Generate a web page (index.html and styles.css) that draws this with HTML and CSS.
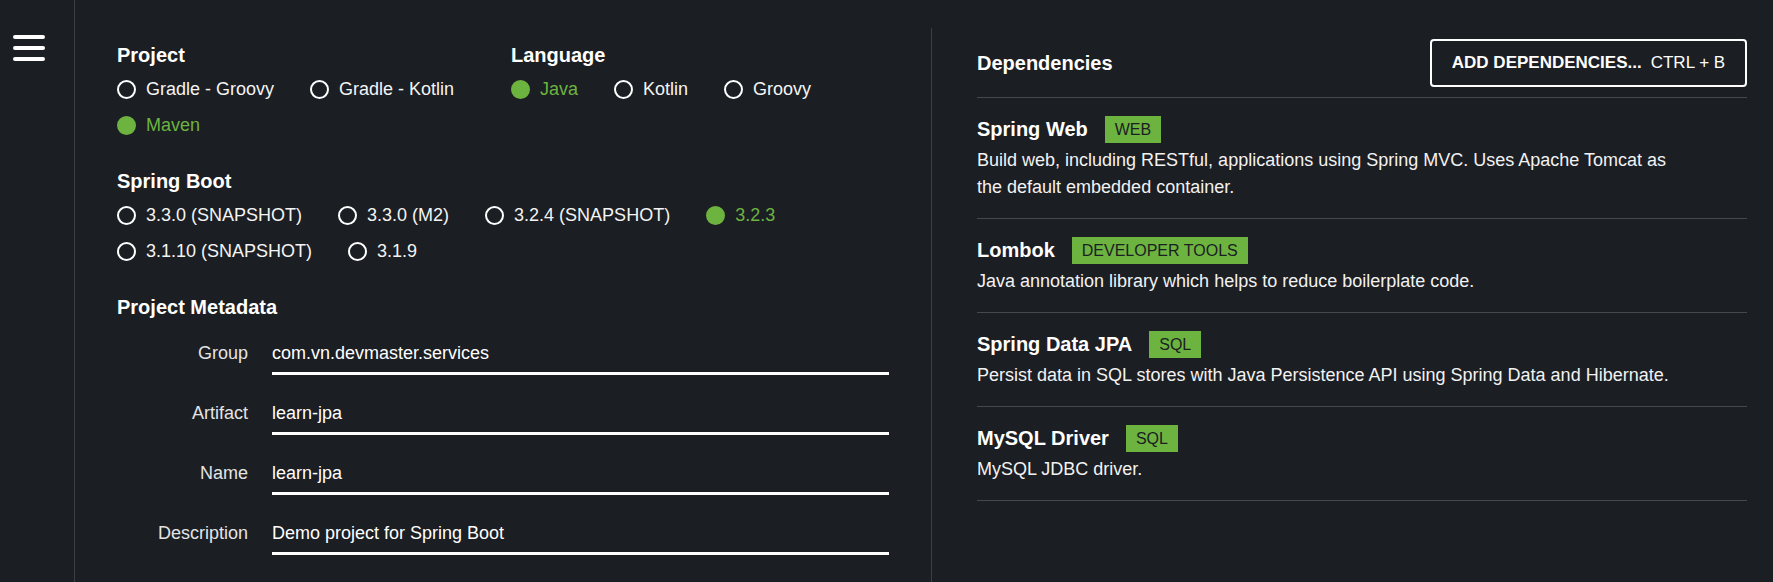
FILE: index.html
```html
<!DOCTYPE html>
<html lang="en">
<head>
<meta charset="utf-8">
<title>Spring Initializr</title>
<link rel="stylesheet" href="styles.css">
</head>
<body>
<div class="app">
  <aside class="sidebar">
    <button class="menu-btn" aria-label="Menu">
      <svg width="32" height="28" viewBox="0 0 32 28" aria-hidden="true">
        <line x1="2" y1="3" x2="30" y2="3" stroke="#fff" stroke-width="4" stroke-linecap="round"/>
        <line x1="2" y1="14" x2="30" y2="14" stroke="#fff" stroke-width="4" stroke-linecap="round"/>
        <line x1="2" y1="25" x2="30" y2="25" stroke="#fff" stroke-width="4" stroke-linecap="round"/>
      </svg>
    </button>
  </aside>
  <main class="main">
    <section class="left">
      <div class="top-grid section">
        <div class="group">
          <h2 class="heading">Project</h2>
          <div class="radios">
            <span class="radio"><span class="dot"></span>Gradle - Groovy</span>
            <span class="radio"><span class="dot"></span>Gradle - Kotlin</span>
            <span class="radio checked"><span class="dot"></span>Maven</span>
          </div>
        </div>
        <div class="group">
          <h2 class="heading">Language</h2>
          <div class="radios">
            <span class="radio checked"><span class="dot"></span>Java</span>
            <span class="radio"><span class="dot"></span>Kotlin</span>
            <span class="radio"><span class="dot"></span>Groovy</span>
          </div>
        </div>
      </div>
      <div class="section">
        <h2 class="heading">Spring Boot</h2>
        <div class="radios">
          <span class="radio"><span class="dot"></span>3.3.0 (SNAPSHOT)</span>
          <span class="radio"><span class="dot"></span>3.3.0 (M2)</span>
          <span class="radio"><span class="dot"></span>3.2.4 (SNAPSHOT)</span>
          <span class="radio checked"><span class="dot"></span>3.2.3</span>
          <span class="radio"><span class="dot"></span>3.1.10 (SNAPSHOT)</span>
          <span class="radio"><span class="dot"></span>3.1.9</span>
        </div>
      </div>
      <div class="section meta">
        <h2 class="heading">Project Metadata</h2>
        <div class="fields">
          <div class="field-row"><span class="label">Group</span><span class="field">com.vn.devmaster.services</span></div>
          <div class="field-row"><span class="label">Artifact</span><span class="field">learn-jpa</span></div>
          <div class="field-row"><span class="label">Name</span><span class="field">learn-jpa</span></div>
          <div class="field-row"><span class="label">Description</span><span class="field">Demo project for Spring Boot</span></div>
        </div>
      </div>
    </section>
    <section class="right">
      <div class="deps-head">
        <h2 class="heading">Dependencies</h2>
        <button class="add-btn"><strong>ADD DEPENDENCIES...</strong><span class="shortcut">CTRL + B</span></button>
      </div>
      <ul class="deps">
        <li class="dep">
          <div class="dep-title"><span class="dep-name">Spring Web</span><span class="badge">WEB</span></div>
          <p class="dep-desc">Build web, including RESTful, applications using Spring MVC. Uses Apache Tomcat as the default embedded container.</p>
        </li>
        <li class="dep">
          <div class="dep-title"><span class="dep-name">Lombok</span><span class="badge">DEVELOPER TOOLS</span></div>
          <p class="dep-desc">Java annotation library which helps to reduce boilerplate code.</p>
        </li>
        <li class="dep">
          <div class="dep-title"><span class="dep-name">Spring Data JPA</span><span class="badge">SQL</span></div>
          <p class="dep-desc">Persist data in SQL stores with Java Persistence API using Spring Data and Hibernate.</p>
        </li>
        <li class="dep">
          <div class="dep-title"><span class="dep-name">MySQL Driver</span><span class="badge">SQL</span></div>
          <p class="dep-desc">MySQL JDBC driver.</p>
        </li>
      </ul>
    </section>
  </main>
</div>
</body>
</html>
```
FILE: styles.css
```css
* { box-sizing: border-box; }
html, body {
  margin: 0;
  padding: 0;
  background: #1b1e23;
  color: #fff;
  font-family: "Liberation Sans", Arial, sans-serif;
  font-size: 18px;
}
.app {
  display: flex;
  min-height: 100vh;
}
.sidebar {
  width: 75px;
  flex: none;
  border-right: 1px solid #3b3e44;
  padding-top: 34px;
  padding-left: 13px;
}
.menu-btn {
  background: none;
  border: 0;
  padding: 0;
  display: block;
  cursor: pointer;
}
.menu-btn svg { display: block; }
.main {
  flex: 1;
  display: flex;
}
.left {
  width: 856px;
  flex: none;
  padding: 43px 42px 0 42px;
}
.heading {
  margin: 0;
  font-size: 20px;
  line-height: 24px;
  font-weight: bold;
  color: #fff;
}
.section { margin-bottom: 26px; }
.top-grid {
  display: grid;
  grid-template-columns: 394px 1fr;
}
.radios {
  display: flex;
  flex-wrap: wrap;
  margin-top: 4px;
}
.radio {
  display: inline-flex;
  align-items: center;
  height: 36px;
  margin-right: 36px;
  white-space: nowrap;
  color: #f4f4f4;
}
.dot {
  width: 19px;
  height: 19px;
  border: 2px solid #fff;
  border-radius: 50%;
  margin-right: 10px;
  flex: none;
}
.radio.checked { color: #6db33f; }
.radio.checked .dot {
  background: #6db33f;
  border-color: #6db33f;
}
.fields { margin-top: 19px; }
.field-row {
  display: grid;
  grid-template-columns: 131px 617px;
  column-gap: 24px;
  margin-bottom: 23px;
}
.label {
  text-align: right;
  line-height: 27px;
  padding-top: 2px;
  color: #e4e4e4;
}
.field {
  line-height: 27px;
  padding-top: 2px;
  padding-bottom: 5px;
  border-bottom: 3px solid #fff;
  color: #fff;
}
.right {
  flex: 1;
  margin-top: 28px;
  border-left: 1px solid #3b3e44;
  padding: 0 26px 0 45px;
}
.deps-head {
  display: flex;
  align-items: center;
  justify-content: space-between;
  padding: 11px 0 10px;
  border-bottom: 1px solid #45484d;
}
.add-btn {
  width: 317px;
  height: 48px;
  background: transparent;
  border: 2px solid #fff;
  border-radius: 4px;
  color: #fff;
  font-family: "Liberation Sans", Arial, sans-serif;
  font-size: 17px;
  display: flex;
  align-items: center;
  justify-content: center;
  gap: 9px;
  padding: 0;
  cursor: pointer;
}
.add-btn strong { font-weight: bold; }
.deps {
  list-style: none;
  margin: 0;
  padding: 0;
}
.dep {
  padding: 18px 0 17px;
  border-bottom: 1px solid #45484d;
}
.dep-title {
  display: flex;
  align-items: center;
  height: 27px;
}
.dep-name {
  font-size: 20px;
  font-weight: bold;
  color: #fff;
}
.badge {
  margin-left: 17px;
  background: #6db33f;
  color: #1b1e23;
  font-size: 16px;
  line-height: 27px;
  padding: 0 10px;
}
.dep-desc {
  margin: 4px 0 0;
  max-width: 712px;
  line-height: 27px;
  color: #f2f2f2;
}
```
